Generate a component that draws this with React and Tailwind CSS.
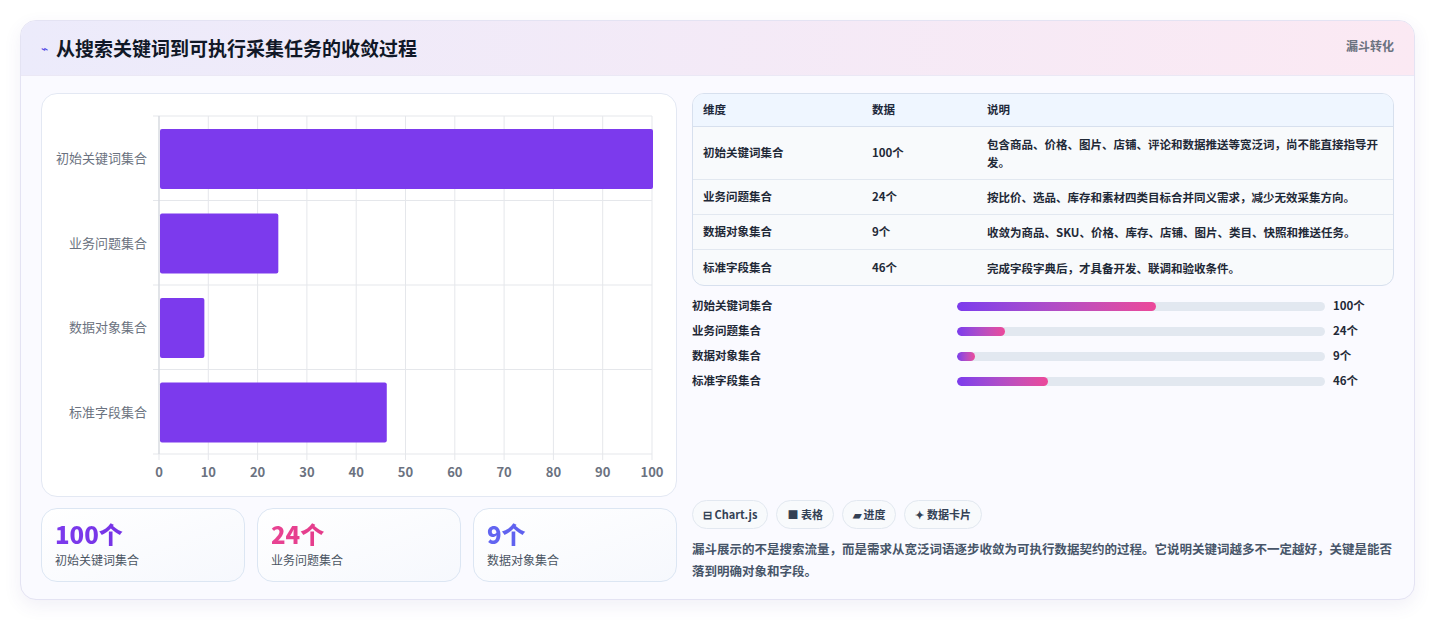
import React from 'react';

const rows = [
  { name: '初始关键词集合', v: 100, desc: '包含商品、价格、图片、店铺、评论和数据推送等宽泛词，尚不能直接指导开发。' },
  { name: '业务问题集合', v: 24, desc: '按比价、选品、库存和素材四类目标合并同义需求，减少无效采集方向。' },
  { name: '数据对象集合', v: 9, desc: '收敛为商品、SKU、价格、库存、店铺、图片、类目、快照和推送任务。' },
  { name: '标准字段集合', v: 46, desc: '完成字段字典后，才具备开发、联调和验收条件。' },
];

const font = { fontFamily: '"Noto Sans CJK SC", "Noto Sans", sans-serif' };

function Chart() {
  const x0 = 117, w = 493, top = 22, bottom = 360;
  return (
    <svg width="636" height="403" className="block">
      {[...Array(11)].map((_, i) => {
        const x = x0 + (w * i) / 10;
        return (
          <g key={i}>
            <line x1={x} y1={top} x2={x} y2={bottom + 6} stroke="#e5e7eb" />
            <text x={x} y={383} textAnchor="middle" fontSize="13" fill="#6b7280" fontWeight="600">{i * 10}</text>
          </g>
        );
      })}
      {[0, 1, 2, 3, 4].map((i) => (
        <line key={i} x1={x0 - 6} x2={x0 + w} y1={top + i * 84.5} y2={top + i * 84.5} stroke="#e5e7eb" />
      ))}
      <line x1={x0} y1={top} x2={x0} y2={bottom} stroke="#d1d5db" />
      {rows.map((r, i) => (
        <g key={r.name}>
          <rect x={x0 + 1} y={35 + i * 84.5} width={(w * r.v) / 100} height={60} rx="2" fill="#7c3aed" />
          <text x={105} y={69 + i * 84.5} textAnchor="end" fontSize="13" fill="#6b7280">{r.name}</text>
        </g>
      ))}
    </svg>
  );
}

export default function App() {
  return (
    <div className="min-h-screen bg-white pt-5 px-5" style={font}>
      <div className="rounded-2xl border border-[#e4e3f3] bg-[#fafaff] shadow-[0_6px_18px_rgba(80,70,150,0.08)] overflow-hidden">
        <div className="h-[55px] flex items-center justify-between px-5 bg-gradient-to-r from-[#ecebfb] to-[#fbe9f3] border-b border-[#ebe8f5]">
          <div className="flex items-center gap-2">
            <span className="text-[#4f46e5] text-xs">⌁</span>
            <h1 className="text-[19px] font-bold text-[#111827]">从搜索关键词到可执行采集任务的收敛过程</h1>
          </div>
          <span className="text-[12px] font-bold text-[#6b7280] self-start mt-4">漏斗转化</span>
        </div>
        <div className="flex gap-[15px] px-5 pt-[17px] pb-[17px]">
          <div className="w-[636px] flex flex-col gap-[11px]">
            <div className="h-[404px] bg-white rounded-2xl border border-[#e3e8f3]">
              <Chart />
            </div>
            <div className="grid grid-cols-3 gap-3">
              {[['100个', '初始关键词集合', 'from-[#7c3aed] to-[#6d28d9]'], ['24个', '业务问题集合', 'from-[#e84393] to-[#db2777]'], ['9个', '数据对象集合', 'from-[#6366f1] to-[#4f46e5]']].map(([n, l, c]) => (
                <div key={l} className="h-[74px] rounded-2xl border border-[#dce6f3] bg-gradient-to-br from-white to-[#f6f8fd] px-[13px] pt-[10px]">
                  <div className={`text-[24px] leading-[30px] font-extrabold bg-gradient-to-r ${c} bg-clip-text text-transparent`}>{n}</div>
                  <div className="text-[12px] text-[#4b5563] mt-0.5">{l}</div>
                </div>
              ))}
            </div>
          </div>
          <div className="flex-1 flex flex-col">
            <div className="rounded-xl border border-[#d7e0ee] overflow-hidden bg-[#f8fafc] text-[11.5px] text-[#1f2937]">
              <div className="flex h-[33px] items-center bg-[#eff6ff] border-b border-[#d7e0ee] font-bold text-[#1e293b]">
                <div className="w-[179px] pl-[10px]">维度</div>
                <div className="w-[115px]">数据</div>
                <div className="flex-1">说明</div>
              </div>
              {rows.map((r, i) => (
                <div key={r.name} className={`flex items-center ${i === 0 ? 'h-[53px]' : 'h-[35px]'} ${i < 3 ? 'border-b border-[#e2e8f0]' : ''}`}>
                  <div className="w-[179px] pl-[10px] font-bold">{r.name}</div>
                  <div className="w-[115px] font-semibold">{r.v}个</div>
                  <div className="flex-1 pr-2 leading-[18px] font-semibold">{r.desc}</div>
                </div>
              ))}
            </div>
            <div className="mt-[11px] flex flex-col gap-[7px]">
              {rows.map((r) => (
                <div key={r.name} className="flex items-center h-[18px] text-[11.5px] font-bold text-[#1f2937]">
                  <div className="w-[265px]">{r.name}</div>
                  <div className="w-[368px] h-[9px] rounded-full bg-[#e2e8f0] overflow-hidden">
                    <div className="h-full rounded-full bg-gradient-to-r from-[#7c3aed] to-[#ec4899]" style={{ width: `${(r.v / 100) * 54}%`, minWidth: 18 }} />
                  </div>
                  <div className="ml-2">{r.v}个</div>
                </div>
              ))}
            </div>
            <div className="mt-auto flex gap-2 text-[11px] font-bold text-[#334155]">
              {['⊟ Chart.js', '■ 表格', '▰ 进度', '✦ 数据卡片'].map((t) => (
                <span key={t} className="h-[29px] px-[10px] flex items-center rounded-full border border-[#e2e8f0] bg-[#f8fafc]">{t}</span>
              ))}
            </div>
            <p className="mt-[9px] text-[12.5px] leading-[22px] font-semibold text-[#475569]">漏斗展示的不是搜索流量，而是需求从宽泛词语逐步收敛为可执行数据契约的过程。它说明关键词越多不一定越好，关键是能否落到明确对象和字段。</p>
          </div>
        </div>
      </div>
    </div>
  );
}
